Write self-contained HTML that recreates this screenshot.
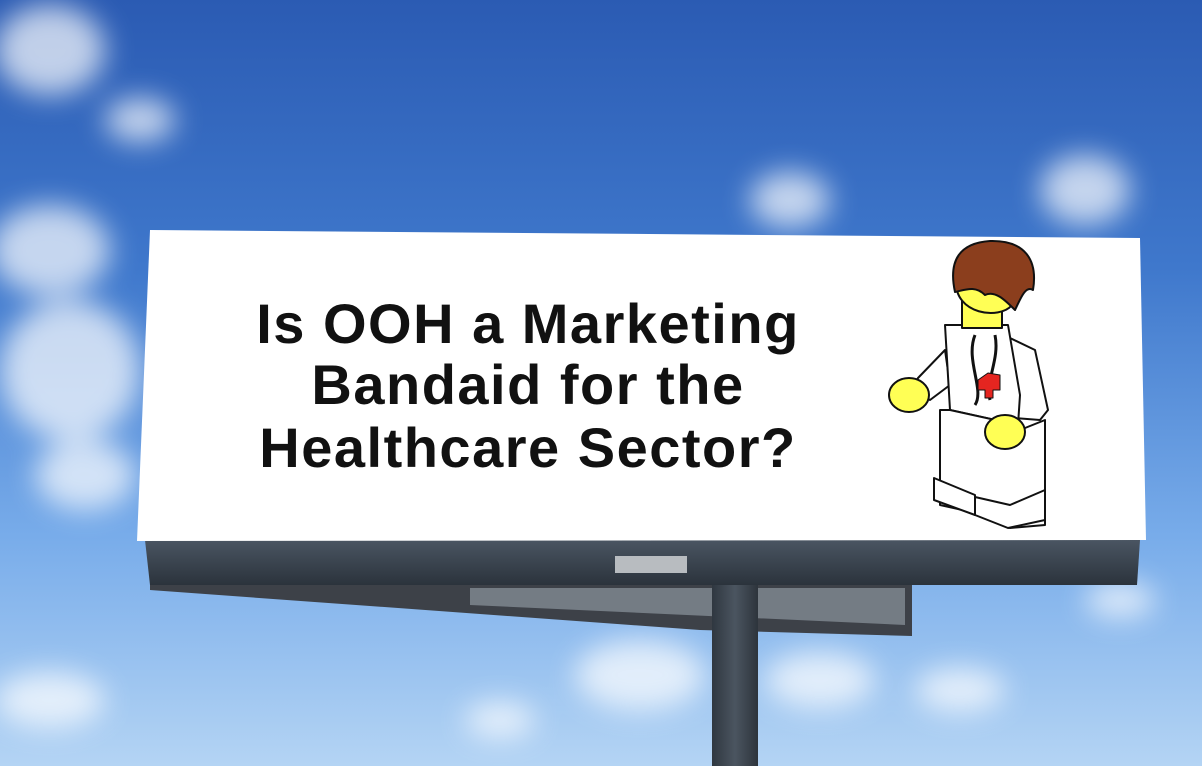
<!DOCTYPE html>
<html><head><meta charset="utf-8"><style>
html,body{margin:0;padding:0;width:1202px;height:766px;overflow:hidden}
svg{display:block}
</style></head><body>
<svg width="1202" height="766" viewBox="0 0 1202 766" xmlns="http://www.w3.org/2000/svg">
<defs>
<linearGradient id="sky" x1="0" y1="0" x2="0" y2="1">
<stop offset="0" stop-color="#2b5bb3"/>
<stop offset="0.35" stop-color="#3f78cc"/>
<stop offset="0.7" stop-color="#78acea"/>
<stop offset="1" stop-color="#b4d4f4"/>
</linearGradient>
<filter id="blur"><feGaussianBlur stdDeviation="14"/></filter>
<linearGradient id="beam" x1="0" y1="0" x2="0" y2="1">
<stop offset="0" stop-color="#4a5562"/><stop offset="1" stop-color="#2b333c"/>
</linearGradient>
<linearGradient id="pole" x1="0" y1="0" x2="1" y2="0">
<stop offset="0" stop-color="#2f3740"/><stop offset="0.5" stop-color="#4b5560"/><stop offset="1" stop-color="#2d343c"/>
</linearGradient>
</defs>
<rect width="1202" height="766" fill="url(#sky)"/>
<g fill="#fff" opacity="0.7" filter="url(#blur)">
<ellipse cx="50" cy="50" rx="55" ry="45"/>
<ellipse cx="140" cy="120" rx="35" ry="22"/>
<ellipse cx="50" cy="250" rx="60" ry="45"/>
<ellipse cx="70" cy="370" rx="70" ry="70"/>
<ellipse cx="85" cy="475" rx="50" ry="35"/>
<ellipse cx="790" cy="200" rx="40" ry="28"/>
<ellipse cx="1085" cy="190" rx="45" ry="35"/>
<ellipse cx="640" cy="675" rx="65" ry="35"/>
<ellipse cx="820" cy="680" rx="55" ry="28"/>
<ellipse cx="960" cy="690" rx="45" ry="22"/>
<ellipse cx="50" cy="700" rx="55" ry="28"/>
<ellipse cx="500" cy="720" rx="35" ry="18"/>
<ellipse cx="1120" cy="600" rx="35" ry="18"/>
</g>
<!-- catwalk -->
<polygon points="150,583 912,583 912,636 700,630 150,590" fill="#3d4148"/>
<polygon points="470,588 905,588 905,625 470,605" fill="#9aa3ad" opacity="0.6"/>
<rect x="712" y="583" width="46" height="183" fill="url(#pole)"/>
<!-- beam -->
<polygon points="145,540 1140,540 1137,585 150,585" fill="url(#beam)"/>
<rect x="615" y="556" width="72" height="17" fill="#b8bcc0"/>
<!-- board -->
<polygon points="150,230 1140,238 1146,540 137,541" fill="#fff"/>
<g font-family="Liberation Sans, sans-serif" font-weight="bold" font-size="56" text-anchor="middle" fill="#111" letter-spacing="1.5">
<text x="528" y="343">Is OOH a Marketing</text>
<text x="528" y="404">Bandaid for the</text>
<text x="528" y="467">Healthcare Sector?</text>
</g>
<!-- lego -->
<g stroke="#111" stroke-width="2" stroke-linejoin="round" fill="#fff">
<path d="M945,350 L918,378 L912,392 L930,400 L950,385 Z"/>
<path d="M1010,338 L1035,350 L1048,410 L1040,420 L1015,418 Z"/>
<path d="M945,325 L1008,325 L1020,395 L1018,425 L950,410 Z"/>
<path d="M950,410 L1018,425 L1020,430 L1045,420 L1045,525 L1010,528 L998,520 L985,515 L940,505 L940,410 Z"/>
<path d="M934,478 L975,495 L975,515 L934,500 Z"/>
<path d="M975,497 L1010,505 L1045,490 L1045,520 L1008,528 L975,515 Z"/>
<path d="M962,300 L1002,300 L1002,328 L962,328 Z" fill="#ffff55"/>
<path d="M956,280 C954,315 1000,320 1012,305 L1015,280 Z" fill="#ffff55"/>
<path d="M955,292 C948,260 960,243 990,241 C1025,240 1038,260 1033,290 C1025,285 1020,300 1015,310 C1005,300 995,290 985,295 C975,285 965,290 955,292 Z" fill="#8b3e1d"/>
<path d="M975,335 C965,360 985,390 975,405" fill="none" stroke-width="3"/>
<path d="M995,335 C1000,360 985,380 990,400" fill="none" stroke-width="3"/>
<path d="M988,373 L1000,375 L1000,390 L993,390 L993,398 L985,398 L985,390 L978,390 L978,380 Z" fill="#e52520" stroke-width="1"/>
<ellipse cx="909" cy="395" rx="20" ry="17" fill="#ffff55"/>
<ellipse cx="1005" cy="432" rx="20" ry="17" fill="#ffff55"/>
</g>
</svg>
</body></html>
